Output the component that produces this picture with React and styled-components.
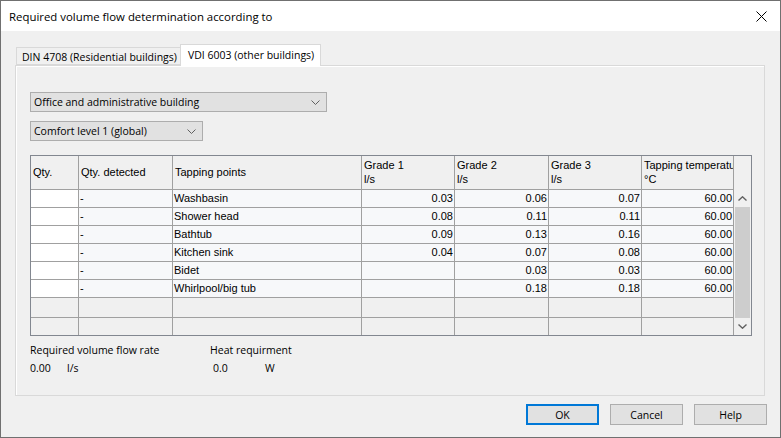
import styled, { createGlobalStyle } from 'styled-components'

const GlobalStyle = createGlobalStyle`
  html, body {
    margin: 0;
    padding: 0;
    background: #f0f0f0;
  }
  * {
    box-sizing: border-box;
  }
`

const uiFont = `"Open Sans", "Noto Sans", sans-serif`
const gridFont = `"Liberation Sans", Arial, sans-serif`

// window frame
const Window = styled.div`
  width: 781px;
  height: 438px;
  border: 1px solid #707070;
  background: #f0f0f0;
  display: flex;
  flex-direction: column;
  font-family: ${uiFont};
  font-size: 10.5px;
  color: #000;
`

const TitleBar = styled.div`
  height: 30px;
  flex: none;
  background: #fff;
  display: flex;
  align-items: center;
  justify-content: space-between;
  padding: 0 10px 0 8px;
  font-size: 11.4px;
`

const CloseIcon = styled.svg`
  width: 11px;
  height: 11px;
  margin-right: 3px;
`

const Body = styled.div`
  flex: 1;
  display: flex;
  flex-direction: column;
  padding: 13px 15px 12px 14px;
`

// tabs
const TabStrip = styled.div`
  display: flex;
  align-items: flex-end;
  height: 21px;
  padding-left: 1px;
`

const Tab = styled.div`
  position: relative;
  height: ${(p) => (p.$active ? '22px' : '18px')};
  margin-bottom: ${(p) => (p.$active ? '-1px' : '0')};
  padding: ${(p) => (p.$active ? '2px 6px 0 7px' : '1px 3px 0 5px')};
  background: ${(p) => (p.$active ? '#fff' : '#f0f0f0')};
  border: 1px solid #d9d9d9;
  border-bottom: ${(p) => (p.$active ? 'none' : '1px solid #d9d9d9')};
  border-right: ${(p) => (p.$active ? '1px solid #d9d9d9' : 'none')};
  z-index: ${(p) => (p.$active ? 1 : 0)};
  white-space: nowrap;
  line-height: 16px;
`

const Panel = styled.div`
  flex: 1;
  border: 1px solid #d9d9d9;
  box-shadow: inset 1px 1px 0 #fff;
  padding: 26px 0 0 14px;
  display: flex;
  flex-direction: column;
  align-items: flex-start;
`

// combo boxes
const Combo = styled.div`
  width: ${(p) => p.$width}px;
  height: 20px;
  margin-bottom: ${(p) => p.$gap || 0}px;
  background: #e1e1e1;
  border: 1px solid #adadad;
  display: flex;
  align-items: center;
  justify-content: space-between;
  padding: 0 6px 0 3px;
  line-height: 16px;
`

const Chevron = () => (
  <svg width="9" height="5" viewBox="0 0 9 5">
    <path d="M0.5 0.5 L4.5 4.5 L8.5 0.5" fill="none" stroke="#606060" strokeWidth="1" />
  </svg>
)

// data grid
const GridFrame = styled.div`
  width: 722px;
  height: 181px;
  border: 1px solid #828790;
  display: flex;
  overflow: hidden;
  font-family: ${gridFont};
  font-size: 11px;
`

const GridBody = styled.div`
  display: grid;
  grid-template-columns: 48px 94px 189px 93px 94px 93px 92px;
  grid-template-rows: 34px repeat(6, 18px) 20px 18px;
  align-content: start;
`

const Cell = styled.div`
  border-right: 1px solid #a0a0a0;
  border-bottom: 1px solid #a0a0a0;
  background: ${(p) => (p.$empty ? '#f0f0f0' : p.$white ? '#fff' : '#f7f8fa')};
  display: flex;
  align-items: center;
  justify-content: ${(p) => (p.$right ? 'flex-end' : 'flex-start')};
  padding: ${(p) => (p.$right ? '0 1px 0 0' : '0 0 0 1px')};
  white-space: nowrap;
  overflow: hidden;
  line-height: 13px;
`

const HeadCell = styled(Cell)`
  background: #f0f0f0;
  flex-direction: column;
  align-items: flex-start;
  justify-content: center;
  padding: 0 0 1px 2px;
  line-height: 14px;
`

const ScrollColumn = styled.div`
  width: 17px;
  display: flex;
  flex-direction: column;
  background: #f0f0f0;
`

const ScrollHead = styled.div`
  height: 34px;
`

const ScrollArrow = styled.div`
  height: 17px;
  display: flex;
  align-items: center;
  justify-content: center;
`

const ScrollTrack = styled.div`
  flex: 1;
  padding: 0 1px 0 1px;
  display: flex;
`

const ScrollThumb = styled.div`
  flex: 1;
  background: #cdcdcd;
`

// summary under grid
const Summary = styled.div`
  margin-top: 6px;
  display: grid;
  grid-template-columns: 180px auto;
  row-gap: 2px;
  line-height: 16px;
`

const ValueRow = styled.div`
  display: flex;
  padding-left: ${(p) => p.$indent || 0}px;
`

const Value = styled.span`
  width: ${(p) => p.$width}px;
`

// footer buttons
const ButtonRow = styled.div`
  display: flex;
  justify-content: flex-end;
  gap: 11px;
  margin-top: 8px;
  margin-right: -2px;
`

const Button = styled.div`
  width: 73px;
  height: 21px;
  background: #e1e1e1;
  border: ${(p) => (p.$default ? '2px solid #0078d7' : '1px solid #adadad')};
  display: flex;
  align-items: center;
  justify-content: center;
  line-height: 16px;
`

const rows = [
  { name: 'Washbasin', g1: '0.03', g2: '0.06', g3: '0.07', temp: '60.00' },
  { name: 'Shower head', g1: '0.08', g2: '0.11', g3: '0.11', temp: '60.00' },
  { name: 'Bathtub', g1: '0.09', g2: '0.13', g3: '0.16', temp: '60.00' },
  { name: 'Kitchen sink', g1: '0.04', g2: '0.07', g3: '0.08', temp: '60.00' },
  { name: 'Bidet', g1: '', g2: '0.03', g3: '0.03', temp: '60.00' },
  { name: 'Whirlpool/big tub', g1: '', g2: '0.18', g3: '0.18', temp: '60.00' },
]

const headers = [
  ['Qty.'],
  ['Qty. detected'],
  ['Tapping points'],
  ['Grade 1', 'l/s'],
  ['Grade 2', 'l/s'],
  ['Grade 3', 'l/s'],
  ['Tapping temperatu', '°C'],
]

export default function App() {
  return (
    <>
      <GlobalStyle />
      <Window>
        <TitleBar>
          <span>Required volume flow determination according to</span>
          <CloseIcon viewBox="0 0 11 11">
            <path d="M0.5 0.5 L10.5 10.5 M10.5 0.5 L0.5 10.5" stroke="#000" strokeWidth="1" />
          </CloseIcon>
        </TitleBar>
        <Body>
          <TabStrip>
            <Tab>DIN 4708 (Residential buildings)</Tab>
            <Tab $active>VDI 6003 (other buildings)</Tab>
          </TabStrip>
          <Panel>
            <Combo $width={297} $gap={9}>
              <span>Office and administrative building</span>
              <Chevron />
            </Combo>
            <Combo $width={173} $gap={14}>
              <span>Comfort level 1 (global)</span>
              <Chevron />
            </Combo>
            <GridFrame>
              <GridBody>
                {headers.map((h) => (
                  <HeadCell key={h[0]}>
                    {h.map((line) => (
                      <span key={line}>{line}</span>
                    ))}
                  </HeadCell>
                ))}
                {rows.map((r) => [
                  <Cell key={r.name + 'q'} $white />,
                  <Cell key={r.name + 'd'}>-</Cell>,
                  <Cell key={r.name + 'n'}>{r.name}</Cell>,
                  <Cell key={r.name + '1'} $right>{r.g1}</Cell>,
                  <Cell key={r.name + '2'} $right>{r.g2}</Cell>,
                  <Cell key={r.name + '3'} $right>{r.g3}</Cell>,
                  <Cell key={r.name + 't'} $right>{r.temp}</Cell>,
                ])}
                {[0, 1].map((row) =>
                  headers.map((h) => <Cell key={row + h[0]} $empty />)
                )}
              </GridBody>
              <ScrollColumn>
                <ScrollHead />
                <ScrollArrow>
                  <svg width="9" height="5" viewBox="0 0 9 5">
                    <path d="M0.5 4.5 L4.5 0.8 L8.5 4.5" fill="none" stroke="#606060" strokeWidth="1.4" />
                  </svg>
                </ScrollArrow>
                <ScrollTrack>
                  <ScrollThumb />
                </ScrollTrack>
                <ScrollArrow>
                  <svg width="9" height="5" viewBox="0 0 9 5">
                    <path d="M0.5 0.5 L4.5 4.2 L8.5 0.5" fill="none" stroke="#606060" strokeWidth="1.4" />
                  </svg>
                </ScrollArrow>
              </ScrollColumn>
            </GridFrame>
            <Summary>
              <span>Required volume flow rate</span>
              <span>Heat requirment</span>
              <ValueRow>
                <Value $width={37}>0.00</Value>
                <span>l/s</span>
              </ValueRow>
              <ValueRow $indent={3}>
                <Value $width={52}>0.0</Value>
                <span>W</span>
              </ValueRow>
            </Summary>
          </Panel>
          <ButtonRow>
            <Button $default>OK</Button>
            <Button>Cancel</Button>
            <Button>Help</Button>
          </ButtonRow>
        </Body>
      </Window>
    </>
  )
}
